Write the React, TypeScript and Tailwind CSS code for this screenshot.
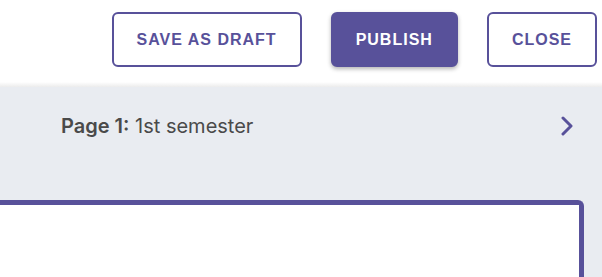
import React from "react";

const purple = "#58519a";

const OutlineButton = ({ label }: { label: string }) => (
	<button className="h-[55px] rounded-md border-2 border-[#58519a] bg-white px-[23px] text-[16px] font-bold uppercase tracking-[1px] text-[#58519a] font-['Liberation_Sans',Arial,sans-serif]">
		{label}
	</button>
);

const App = () => {
	return (
		<div className="h-[277px] w-[602px] overflow-hidden bg-[#e9ecf1] font-['Inter',sans-serif]">
			<header className="flex h-[82px] items-start justify-end gap-[29px] bg-white pr-[5px] pt-[12px]">
				<OutlineButton label="Save as draft" />
				<button className="h-[55px] rounded-md border-2 border-[#58519a] bg-[#58519a] px-[23px] text-[16px] font-bold uppercase tracking-[1px] text-white shadow-[0_2px_4px_rgba(0,0,0,0.3)] font-['Liberation_Sans',Arial,sans-serif]">
					Publish
				</button>
				<OutlineButton label="Close" />
			</header>
			<div className="h-[5px] bg-gradient-to-b from-white to-[#ececec]" />
			<div className="flex h-[78px] items-center justify-between pl-[61px] pr-[29px] pb-[1px]">
				<p className="text-[20px] text-[#4a4a4a]">
					<span className="font-semibold">Page 1:</span> 1st semester
				</p>
				<svg width="12" height="20" viewBox="0 0 12 20" fill="none">
					<polyline
						points="2,2 10,10 2,18"
						stroke={purple}
						strokeWidth="3"
						strokeLinecap="round"
						strokeLinejoin="round"
					/>
				</svg>
			</div>
			<div className="pt-[35px] pr-[18px]">
				<div className="-ml-[10px] h-[100px] rounded-tr-md border-[5px] border-b-0 border-[#58519a] bg-white" />
			</div>
		</div>
	);
};

export default App;
